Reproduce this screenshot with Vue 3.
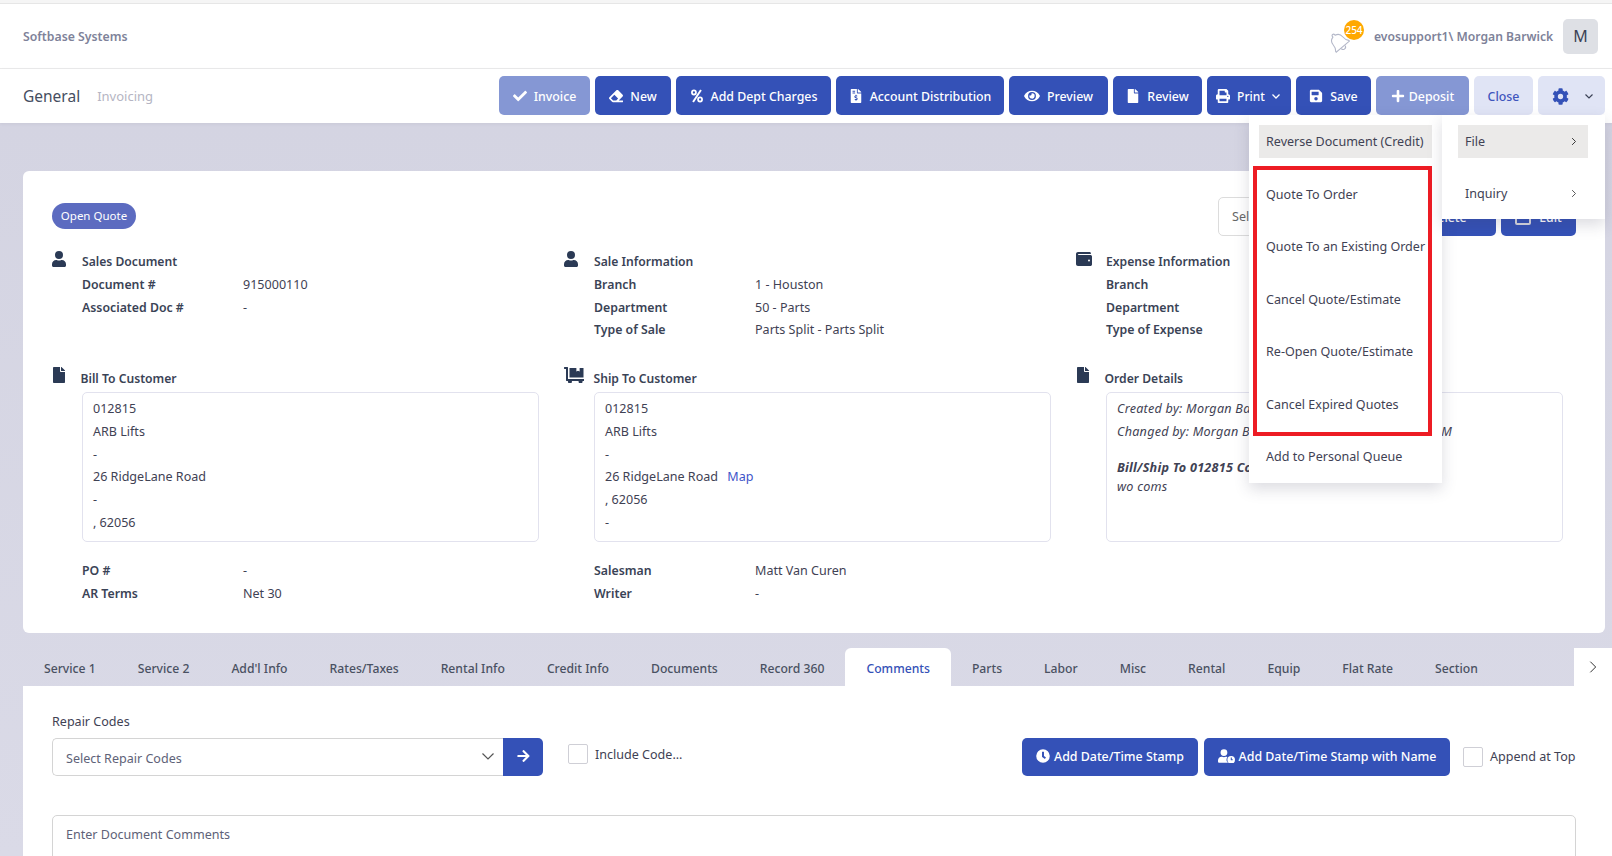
<script setup>
const tabs = ['Service 1','Service 2',"Add'l Info",'Rates/Taxes','Rental Info','Credit Info','Documents','Record 360','Comments','Parts','Labor','Misc','Rental','Equip','Flat Rate','Section']
const redItems = ['Quote To Order','Quote To an Existing Order','Cancel Quote/Estimate','Re-Open Quote/Estimate','Cancel Expired Quotes']
const billLines = ['012815','ARB Lifts','-','26 RidgeLane Road','-',', 62056']
</script>

<template>
  <div class="page">
    <div class="strip"></div>
    <header class="top">
      <span class="brand">Softbase Systems</span>
      <div class="user">
        <span class="bell">
          <svg viewBox="0 0 24 24" width="23" height="23" fill="none" stroke="#b3b7c8" stroke-width="1.100"><g transform="rotate(-40 12 12)"><path d="M12 2.500a1.500 1.500 0 0 1 1.500 1.500v.7c3 .7 5 3.200 5 6.300 0 4 1 5.500 2.500 7v1H3v-1c1.500-1.500 2.500-3 2.500-7 0-3.100 2-5.600 5-6.300V4A1.500 1.500 0 0 1 12 2.500z"/><path d="M9.500 19.500a2.500 2.500 0 0 0 5 0"/></g></svg>
          <b class="badge">254</b>
        </span>
        <span class="uname">evosupport1\ Morgan Barwick</span>
        <span class="avatar">M</span>
      </div>
    </header>
    <div class="sub">
      <div class="crumbs"><span class="general">General</span><span class="invoicing">Invoicing</span></div>
      <div class="actions">
        <button class="btn soft w91"><svg viewBox="0 0 512 512" class="ic"><path fill="#fff" d="M173 439L7 273c-10-10-10-26 0-36l36-36c10-10 26-10 36 0l112 112L433 71c10-10 26-10 36 0l36 36c10 10 10 26 0 36L209 439c-10 10-26 10-36 0z"/></svg>Invoice</button>
        <button class="btn w76"><svg viewBox="0 0 512 512" class="ic"><path fill="#fff" d="M497.941 273.941c18.745-18.745 18.745-49.137 0-67.882l-160-160c-18.745-18.745-49.137-18.745-67.882 0l-256 256c-18.745 18.745-18.745 49.137 0 67.882l96 96A48.004 48.004 0 0 0 144 480h356c6.627 0 12-5.373 12-12v-40c0-6.627-5.373-12-12-12H355.883l142.058-142.059zm-302.627-62.627l137.373 137.373L265.373 416H150.628l-80-80 124.686-124.686z"/></svg>New</button>
        <button class="btn w155"><svg viewBox="0 0 14 16" class="ic"><g fill="none" stroke="#fff" stroke-width="2"><circle cx="3.500" cy="4" r="2.300"/><circle cx="10.500" cy="12" r="2.300"/><path d="M11.500 1.200 2.500 14.800" stroke-width="2.200"/></g></svg>Add Dept Charges</button>
        <button class="btn w168"><svg viewBox="0 0 384 512" class="ic"><path fill="#fff" d="M377 105L279 7c-5-4-11-7-17-7h-6v128h128v-6c0-6-3-12-7-17zM224 136V0H24C11 0 0 11 0 24v464c0 13 11 24 24 24h336c13 0 24-11 24-24V160H248c-13 0-24-11-24-24zM64 72c0-4 4-8 8-8h80c4 0 8 4 8 8v16c0 4-4 8-8 8H72c-4 0-8-4-8-8zm0 64c0-4 4-8 8-8h80c4 0 8 4 8 8v16c0 4-4 8-8 8H72c-4 0-8-4-8-8zm144 264v24c0 4-4 8-8 8h-16c-4 0-8-4-8-8v-24c-11 0-22-4-31-11-4-3-4-8-1-12l12-11c3-3 7-3 10-1 4 2 8 3 12 3h28c7 0 12-6 12-13 0-6-4-11-9-12l-45-14c-19-6-32-24-32-44 0-25 19-45 44-46v-24c0-4 4-8 8-8h16c4 0 8 4 8 8v24c11 0 22 4 31 11 4 3 4 8 1 12l-12 11c-3 3-7 3-10 1-4-2-8-3-12-3h-28c-7 0-12 6-12 13 0 6 4 11 9 12l45 14c19 6 32 24 32 44 0 25-19 45-44 46z"/></svg>Account Distribution</button>
        <button class="btn w99"><svg viewBox="0 0 576 512" class="ic eye"><path fill="#fff" d="M572 241C518 136 410 64 288 64S58 136 4 241a32 32 0 0 0 0 30c54 105 162 177 284 177s230-72 284-177a32 32 0 0 0 0-30zM288 400a144 144 0 1 1 144-144 144 144 0 0 1-144 144zm0-240a95 95 0 0 0-25 4 48 48 0 0 1-67 67 96 96 0 1 0 92-71z"/></svg>Preview</button>
        <button class="btn w89"><svg viewBox="0 0 384 512" class="ic"><path fill="#fff" d="M224 136V0H24C11 0 0 11 0 24v464c0 13 11 24 24 24h336c13 0 24-11 24-24V160H248c-13 0-24-11-24-24zm160-14v6H256V0h6c6 0 12 3 17 7l98 98c4 5 7 11 7 17z"/></svg>Review</button>
        <button class="btn w84"><svg viewBox="0 0 512 512" class="ic"><path fill="#fff" d="M448 192V77c0-9-3-17-9-23L393 9c-6-6-14-9-23-9H96C78 0 64 14 64 32v160c-35 0-64 29-64 64v112c0 9 7 16 16 16h48v96c0 18 14 32 32 32h320c18 0 32-14 32-32v-96h48c9 0 16-7 16-16V256c0-35-29-64-64-64zm-64 256H128v-96h256zm0-224H128V64h192v48c0 9 7 16 16 16h48zm48 72c-13 0-24-11-24-24s11-24 24-24 24 11 24 24-11 24-24 24z"/></svg><span class="small">Print</span><svg viewBox="0 0 12 12" class="chev"><path d="M2.500 4.500 6 8l3.500-3.500" fill="none" stroke="#fff" stroke-width="1.300"/></svg></button>
        <button class="btn w75"><svg viewBox="0 0 448 512" class="ic"><path fill="#fff" d="M433 129l-84-84c-9-9-21-14-34-14H48C21 32 0 53 0 80v352c0 27 21 48 48 48h352c27 0 48-21 48-48V163c0-13-5-25-15-34zM224 416a64 64 0 1 1 0-128 64 64 0 0 1 0 128zm96-304v100c0 7-5 12-12 12H76c-7 0-12-5-12-12V108c0-7 5-12 12-12h228c3 0 6 1 8 4l4 4c3 2 4 5 4 8z"/></svg>Save</button>
        <button class="btn soft w92"><svg viewBox="0 0 448 512" class="ic plus"><path fill="#fff" d="M416 208H272V64c0-18-14-32-32-32h-32c-18 0-32 14-32 32v144H32c-18 0-32 14-32 32v32c0 18 14 32 32 32h144v144c0 18 14 32 32 32h32c18 0 32-14 32-32V304h144c18 0 32-14 32-32v-32c0-18-14-32-32-32z"/></svg>Deposit</button>
        <button class="btn light w59">Close</button>
        <button class="btn light w67"><svg viewBox="0 0 512 512" class="gear"><path fill="#3451b7" d="M487 316l-42-25a191 191 0 0 0 0-70l42-25c5-3 7-9 6-14-11-35-30-67-54-94-4-4-10-5-15-2l-42 25c-18-15-38-27-60-35V27c0-6-4-11-9-12-37-8-74-8-109 0-5 1-9 6-9 12v49c-22 8-42 20-60 35L93 86c-5-3-11-2-15 2-24 27-43 59-54 94-2 5 1 11 6 14l42 25a191 191 0 0 0 0 70l-42 25c-5 3-7 9-6 14 11 35 30 67 54 94 4 4 10 5 15 2l42-25c18 15 38 27 60 35v49c0 6 4 11 9 12 37 8 74 8 109 0 5-1 9-6 9-12v-49c22-8 42-20 60-35l42 25c5 3 11 2 15-2 24-27 43-59 54-94 2-5-1-11-6-14zM256 336a80 80 0 1 1 0-160 80 80 0 0 1 0 160z"/></svg><svg viewBox="0 0 12 12" class="chev dark"><path d="M2.500 4.500 6 8l3.500-3.500" fill="none" stroke="#3b4256" stroke-width="1.200"/></svg></button>
      </div>
    </div>

    <main class="body">
      <section class="card">
        <div class="card-head">
          <span class="chip">Open Quote</span>
          <div class="card-tools">
            <div class="select-mini">Select...</div>
            <button class="btn mini b1">Delete</button>
            <button class="btn mini b2"><i class="edit-ic"></i>Edit</button>
          </div>
        </div>
        <div class="grid">
          <div class="col">
            <div class="title"><svg viewBox="0 0 448 512" class="ti"><path fill="#2b3a55" d="M224 256a128 128 0 1 0 0-256 128 128 0 0 0 0 256zm90 32h-17a174 174 0 0 1-146 0h-17C60 288 0 348 0 422v42c0 27 21 48 48 48h352c27 0 48-21 48-48v-42c0-74-60-134-134-134z"/></svg>Sales Document</div>
            <dl class="kv"><dt>Document #</dt><dd>915000110</dd><dt>Associated Doc #</dt><dd>-</dd></dl>
          </div>
          <div class="col">
            <div class="title"><svg viewBox="0 0 448 512" class="ti"><path fill="#2b3a55" d="M224 256a128 128 0 1 0 0-256 128 128 0 0 0 0 256zm90 32h-17a174 174 0 0 1-146 0h-17C60 288 0 348 0 422v42c0 27 21 48 48 48h352c27 0 48-21 48-48v-42c0-74-60-134-134-134z"/></svg>Sale Information</div>
            <dl class="kv"><dt>Branch</dt><dd>1 - Houston</dd><dt>Department</dt><dd>50 - Parts</dd><dt>Type of Sale</dt><dd>Parts Split - Parts Split</dd></dl>
          </div>
          <div class="col">
            <div class="title"><svg viewBox="0 0 512 512" class="ti wallet"><path fill="#2b3a55" d="M461 128H80c-9 0-16-7-16-16s7-16 16-16h384c9 0 16-7 16-16 0-27-21-48-48-48H64C29 32 0 61 0 96v320c0 35 29 64 64 64h397c28 0 51-22 51-48V176c0-26-23-48-51-48zm-45 208a32 32 0 1 1 0-64 32 32 0 0 1 0 64z"/></svg>Expense Information</div>
            <dl class="kv"><dt>Branch</dt><dd></dd><dt>Department</dt><dd></dd><dt>Type of Expense</dt><dd></dd></dl>
          </div>
          <div class="col">
            <div class="title t2"><svg viewBox="0 0 384 512" class="ti"><path fill="#2b3a55" d="M224 136V0H24C11 0 0 11 0 24v464c0 13 11 24 24 24h336c13 0 24-11 24-24V160H248c-13 0-24-11-24-24zm160-14v6H256V0h6c6 0 12 3 17 7l98 98c4 5 7 11 7 17z"/></svg>Bill To Customer</div>
            <div class="box"><p v-for="(l, i) in billLines" :key="i">{{ l }}</p></div>
            <dl class="kv after"><dt>PO #</dt><dd>-</dd><dt>AR Terms</dt><dd>Net 30</dd></dl>
          </div>
          <div class="col">
            <div class="title t2 ship"><svg viewBox="0 0 640 512" class="ti wide"><path fill="#2b3a55" d="M632 384H128V16c0-9-7-16-16-16H16C7 0 0 7 0 16v32c0 9 7 16 16 16h48v368c0 9 7 16 16 16h50a64 64 0 1 0 120 0h220a64 64 0 1 0 120 0h42c9 0 16-7 16-16v-32c0-9-7-16-16-16zM176 32v304h448V32H500v112l-52-28-52 28V32z"/></svg>Ship To Customer</div>
            <div class="box">
              <p>012815</p><p>ARB Lifts</p><p>-</p><p>26 RidgeLane Road <a class="map">Map</a></p><p>, 62056</p><p>-</p>
            </div>
            <dl class="kv after"><dt>Salesman</dt><dd>Matt Van Curen</dd><dt>Writer</dt><dd>-</dd></dl>
          </div>
          <div class="col">
            <div class="title t2"><svg viewBox="0 0 384 512" class="ti"><path fill="#2b3a55" d="M224 136V0H24C11 0 0 11 0 24v464c0 13 11 24 24 24h336c13 0 24-11 24-24V160H248c-13 0-24-11-24-24zm160-14v6H256V0h6c6 0 12 3 17 7l98 98c4 5 7 11 7 17z"/></svg>Order Details</div>
            <div class="box details">
              <p>Created by: Morgan Barwick on 6/4/2024 10:12 AM</p>
              <p>Changed by: Morgan Barwick on 06/14/2024 10:12:31 AM</p>
              <p class="gap"><b>Bill/Ship To 012815 Comments</b></p>
              <p class="tight">wo coms</p>
            </div>
          </div>
        </div>
      </section>

      <nav class="tabs">
        <a v-for="t in tabs" :key="t" class="tab" :class="{ active: t === 'Comments' }">{{ t }}</a>
        <span class="more"><svg viewBox="0 0 12 20" width="8" height="14"><path d="M2 2l8 8-8 8" fill="none" stroke="#222" stroke-width="1.400"/></svg></span>
      </nav>
      <section class="panel">
        <div class="row">
          <div class="codes">
            <label class="lbl">Repair Codes</label>
            <div class="group">
              <div class="sel"><span>Select Repair Codes</span><svg viewBox="0 0 14 14" width="14" height="14"><path d="M1.500 4.500 7 10l5.500-5.500" fill="none" stroke="#555" stroke-width="1.200"/></svg></div>
              <button class="go"><svg viewBox="0 0 448 512" width="13" height="14"><path fill="#fff" d="M190 66l22-22c10-9 25-9 34 0l194 194c9 9 9 24 0 34L246 466c-9 10-24 10-34 0l-22-22c-9-9-9-25 1-34l120-114H24c-13 0-24-11-24-24v-32c0-13 11-24 24-24h287L191 102c-10-9-10-25-1-34z"/></svg></button>
            </div>
          </div>
          <label class="check inc"><i class="cb"></i>Include Code...</label>
          <div class="stamp">
            <button class="btn st1"><svg viewBox="0 0 512 512" class="ic s"><path fill="#fff" d="M256 8a248 248 0 1 0 0 496 248 248 0 0 0 0-496zm57 350l-88-64c-3-2-5-6-5-10V116c0-7 5-12 12-12h48c7 0 12 5 12 12v138l63 46c6 4 7 12 3 17l-28 39c-4 6-12 7-17 2z"/></svg>Add Date/Time Stamp</button>
            <button class="btn st2"><svg viewBox="0 0 640 512" class="ic s2"><path fill="#fff" d="M224 256a128 128 0 1 0 0-256 128 128 0 0 0 0 256zm272 0a144 144 0 1 0 0 288 144 144 0 0 0 0-288zm48 159h-52c-7 0-12-5-12-12v-83c0-7 5-12 12-12h16c7 0 12 5 12 12v55h24c7 0 12 5 12 12v16c0 7-5 12-12 12zM320 400c0-39 13-76 35-106a179 179 0 0 0-41-6h-17a174 174 0 0 1-146 0h-17C60 288 0 348 0 422v42c0 27 21 48 48 48h335c-38-26-63-65-63-112z"/></svg>Add Date/Time Stamp with Name</button>
            <label class="check app"><i class="cb"></i>Append at Top</label>
          </div>
        </div>
        <div class="comments">Enter Document Comments</div>
      </section>
    </main>

    <div class="menu one">
      <a class="item hi">Reverse Document (Credit)</a>
      <div class="red-wrap">
        <a v-for="t in redItems" :key="t" class="item">{{ t }}</a>
        <div class="red"></div>
      </div>
      <a class="item">Add to Personal Queue</a>
    </div>
    <div class="menu two">
      <a class="item hi">File<svg viewBox="0 0 8 12" width="6" height="9"><path d="M1.500 1.500 6 6l-4.500 4.500" fill="none" stroke="#333" stroke-width="1.300"/></svg></a>
      <a class="item">Inquiry<svg viewBox="0 0 8 12" width="6" height="9"><path d="M1.500 1.500 6 6l-4.500 4.500" fill="none" stroke="#555" stroke-width="1.300"/></svg></a>
    </div>
  </div>
</template>

<style>
html, body { margin: 0; height: 100%; overflow: hidden; background: #d3d3e1; }
</style>

<style scoped>
.page { position: relative; width: 1612px; height: 856px; overflow: hidden; font-family: "Noto Sans", sans-serif; font-size: 12.55px; color: #3f4254; background: linear-gradient(#d3d3e1, #dadae7); }
.strip { height: 3px; background: #f5f5f5; border-bottom: 1px solid #e6e6e6; }
.top { height: 65px; box-sizing: border-box; background: #fff; border-bottom: 1px solid #ebebeb; display: flex; align-items: center; justify-content: space-between; padding: 0 14px 0 23px; }
.brand { color: #7e8299; font-weight: 600; font-size: 12.25px; }
.user { display: flex; align-items: center; }
.bell { position: relative; width: 41px; height: 35px; }
.bell svg { position: absolute; left: 3px; top: 11px; }
.badge { position: absolute; left: 20px; top: 1px; width: 20px; height: 20px; border-radius: 50%; background: #ffa800; color: #fff; font-size: 10px; font-weight: 500; text-align: center; line-height: 20px; }
.uname { color: #7e8299; font-weight: 600; font-size: 12.15px; margin-left: 9px; width: 180px; white-space: nowrap; }
.avatar { width: 35px; height: 35px; border-radius: 5px; background: #dee0e5; color: #3b4256; font-size: 16px; display: flex; align-items: center; justify-content: center; margin-left: 9px; }
.sub { height: 54px; box-sizing: border-box; background: #fff; display: flex; align-items: flex-start; justify-content: space-between; padding: 7px 7px 0 23px; box-shadow: 0 1px 3px rgba(60,60,90,.08); position: relative; }
.crumbs { display: flex; align-items: center; height: 39px; }
.general { font-size: 15.5px; color: #464e5f; }
.invoicing { font-size: 13px; color: #b5b5c3; margin-left: 17px; }
.actions { display: flex; gap: 5px; }
.btn { height: 39px; box-sizing: border-box; border: 0; border-radius: 5px; background: #3451b7; color: #fff; font: 500 12.35px "Noto Sans", sans-serif; display: inline-flex; align-items: center; justify-content: center; padding: 0; white-space: nowrap; }
.actions .btn { padding-top: 1px; }
.btn.soft { background: #8597d4; }
.btn.light { background: #e0e4f5; color: #3f55bd; }
.w91 { width: 91px; } .w76 { width: 76px; } .w155 { width: 155px; } .w168 { width: 168px; } .w99 { width: 99px; } .w89 { width: 89px; } .w84 { width: 84px; } .w75 { width: 75px; } .w92 { width: 93px; } .w59 { width: 59px; } .w67 { width: 67px; }
.ic { width: 14px; height: 14px; margin-right: 7px; flex: none; }
.ic.eye { width: 16px; }
.ic.plus { margin-right: 4px; }
.small { font-size: 12px; }
.chev { width: 12px; height: 12px; margin-left: 5px; }
.chev.dark { margin-left: 14px; }
.gear { width: 17px; height: 17px; margin-left: 4px; }
.body { padding: 48px 0 0 23px; }
.card { width: 1582px; height: 462px; box-sizing: border-box; background: #fff; border-radius: 6px; padding: 32px 17px 0 29px; position: relative; }
.card-head { height: 26px; }
.chip { display: inline-block; width: 84px; height: 26px; line-height: 25px; text-align: center; font-size: 11.5px; color: #fff; background: #5c6bc0; border-radius: 13px; }
.card-tools { position: absolute; top: 26px; right: 29px; display: flex; gap: 5px; }
.select-mini { width: 176px; height: 39px; box-sizing: border-box; border: 1px solid #dcdcdc; border-radius: 5px; line-height: 37px; padding-left: 13px; color: #666; }
.btn.mini { height: 39px; padding-top: 2px; }
.b1 { width: 97px; } .b2 { width: 75px; }
.edit-ic { display: block; width: 16px; height: 14px; box-sizing: border-box; border: 2px solid #d8d8e0; border-radius: 2px; margin-right: 8px; }
.grid { display: grid; grid-template-columns: 512px 512px 1fr; grid-template-rows: 115px auto; margin-top: 22px; }
.col { padding-right: 25px; position: relative; padding-left: 30px; }
.title { font-weight: 600; font-size: 12.15px; color: #3a4356; line-height: 22px; height: 23px; white-space: nowrap; }
.ti { position: absolute; left: 0; top: 0; width: 14px; height: 16px; }
.ti.wide { width: 20px; }
.ti.wallet { width: 16px; }
.t2 { margin: 2px 0 0 -1.500px; }
.t2.ship { margin-left: -0.500px; }
.t2 .ti { margin: 1px 0 0 0; left: 0; }
.kv { margin: 0; display: grid; grid-template-columns: 161px 1fr; grid-auto-rows: 22.700px; line-height: 22.700px; }
.kv dt { font-weight: 600; color: #3a4356; font-size: 12.3px; }
.kv dd { margin: 0; }
.box { height: 150px; box-sizing: border-box; border: 1px solid #e2e2ee; border-radius: 5px; padding: 5px 10px; margin-top: 1px; }
.box p { margin: 0; line-height: 22.800px; height: 22.800px; white-space: nowrap; }
.map { color: #3f55c9; margin-left: 6px; }
.details p { font-style: italic; font-size: 12.6px; letter-spacing: .25px; }
.details .gap { margin-top: 14px; height: 20px; line-height: 20px; }
.details .tight { line-height: 17px; height: 17px; }
.kv.after { margin-top: 18px; }
.tabs { display: flex; height: 38px; margin-top: 15px; position: relative; align-items: stretch; }
.tab { padding: 0 21px; line-height: 42px; font-weight: 500; font-size: 12.2px; color: #4a5162; white-space: nowrap; }
.tab.active { background: #fff; color: #3451b7; border-radius: 6px 6px 0 0; }
.more { position: absolute; right: 0; top: 0; width: 38px; height: 38px; background: #fff; display: flex; align-items: center; justify-content: center; }
.panel { background: #fff; height: 200px; padding: 0 36px 0 29px; }
.row { display: flex; height: 129px; position: relative; }
.codes { width: 491px; padding-top: 27px; }
.lbl { display: block; line-height: 18px; height: 25px; color: #3f4254; }
.group { display: flex; height: 38px; }
.sel { width: 451px; box-sizing: border-box; border: 1px solid #d4d4d4; border-right: 0; border-radius: 5px 0 0 5px; display: flex; align-items: center; justify-content: space-between; padding: 3px 8px 0 13px; color: #5e6278; }
.sel svg { margin-bottom: 5px; }
.go { width: 40px; border: 0; background: #3451b7; border-radius: 0 5px 5px 0; display: flex; align-items: center; justify-content: center; padding: 0 0 3px; }
.check { display: flex; align-items: center; white-space: nowrap; color: #3f4254; }
.cb { width: 20px; height: 20px; box-sizing: border-box; border: 1px solid #cfcfd6; border-radius: 2px; margin-right: 7px; display: block; }
.inc { align-self: flex-start; margin: 58px 0 0 25px; }
.stamp { position: absolute; left: 970px; top: 52px; display: flex; align-items: center; }
.stamp .btn { height: 38px; padding-bottom: 2px; font-size: 12.4px; }
.st1 { width: 176px; margin-right: 6px; }
.st2 { width: 246px; margin-right: 13px; }
.s { margin-right: 4px; } .s2 { width: 17px; margin-right: 4px; }
.app { padding-bottom: 1px; }
.comments { height: 120px; border: 1px solid #d4d4d4; border-radius: 5px; padding: 10px 13px; color: #5e6278; }
.menu { position: absolute; top: 115px; background: #fff; box-shadow: 0 6px 14px rgba(60,60,90,.18); box-sizing: border-box; }
.menu.one { left: 1249px; width: 193px; height: 368px; padding: 10px 10px 0; }
.menu.two { left: 1442px; width: 163px; height: 104px; padding: 10px 17px 0 16px; }
.item { display: flex; align-items: center; justify-content: space-between; height: 33px; box-sizing: border-box; padding: 0 7px; white-space: nowrap; color: #3f4254; margin-bottom: 19.500px; }
.item.hi { background: #ebeae9; padding-bottom: 1px; }
.two .item { padding-bottom: 1px; }
.two .item svg { margin-right: 4px; }
.red-wrap { position: relative; }
.red { position: absolute; left: -6px; top: -11.500px; width: 179px; height: 270px; box-sizing: border-box; border: 4px solid #ed1c24; pointer-events: none; }
</style>
